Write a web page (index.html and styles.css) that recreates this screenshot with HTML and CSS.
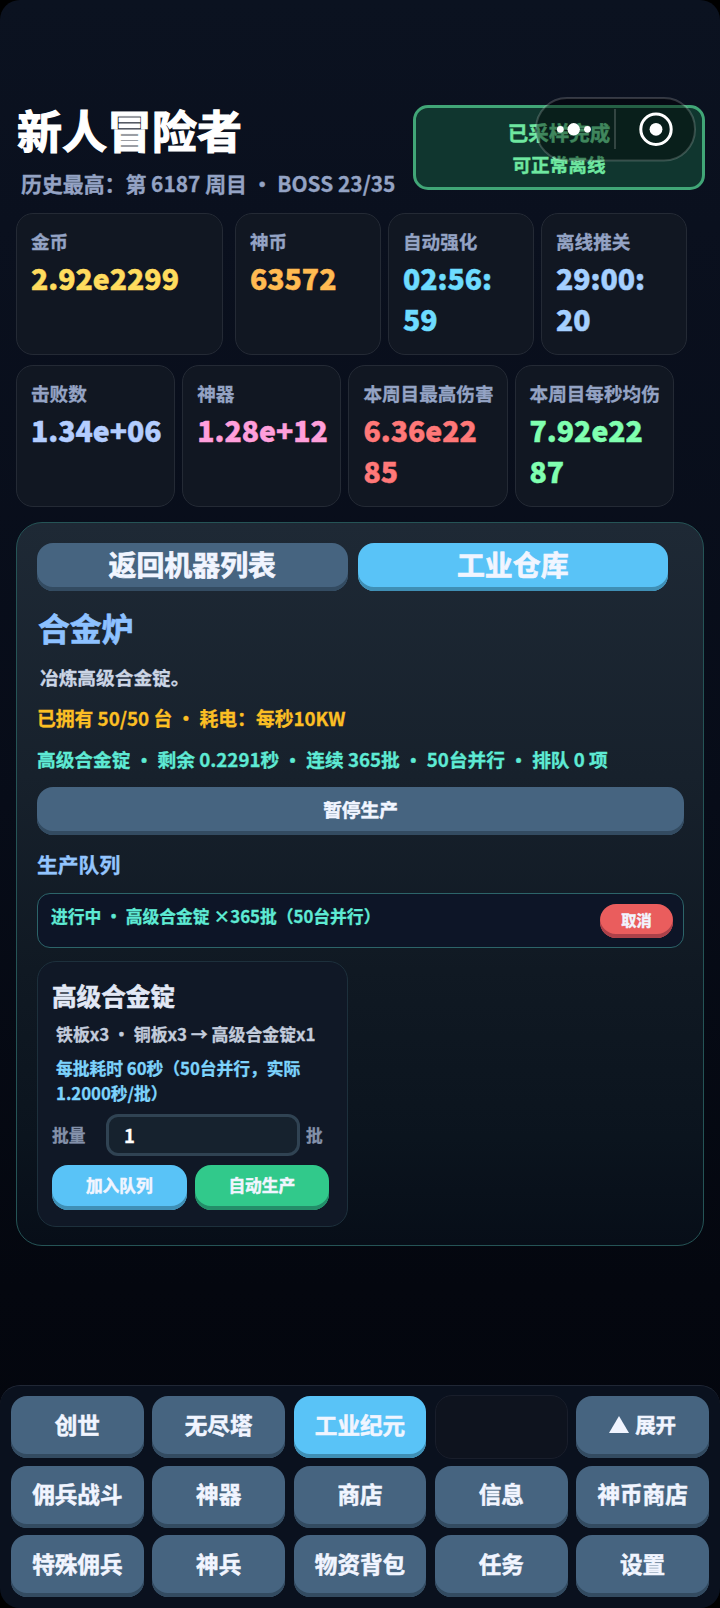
FILE: index.html
```html
<!DOCTYPE html>
<html lang="zh-CN">
<head>
<meta charset="utf-8">
<title>新人冒险者</title>
<link rel="stylesheet" href="styles.css">
</head>
<body>
<div class="app">
  <header class="header">
    <div class="player">
      <h1 class="player-name">新人冒险者</h1>
      <p class="record">历史最高：第 6187 周目 · BOSS 23/35</p>
    </div>
    <div class="sample"><span class="sample-state">已采样完成</span><span>可正常离线</span></div>
    <svg class="capsule" width="162" height="65" viewBox="0 0 162 65">
      <rect x="1" y="1" width="159" height="62.5" rx="31" fill="#000" fill-opacity=".42" stroke="#fff" stroke-opacity=".18" stroke-width="2"/>
      <path d="M80 12v40" stroke="#fff" stroke-opacity=".22" stroke-width="1.6"/>
      <g fill="#fff"><circle cx="25.3" cy="32.3" r="3.4"/><circle cx="38.7" cy="32.3" r="6.2"/><circle cx="52.5" cy="32.3" r="3.4"/><circle cx="121" cy="32.3" r="6.4"/></g>
      <circle cx="121" cy="32.3" r="15.2" fill="none" stroke="#fff" stroke-width="3"/>
    </svg>
  </header>

  <section class="stats">
    <div class="stat wide">
      <span class="label">金币</span><b class="value gold">2.92e2299</b></div>
    <div class="stat"><span class="label">神币</span><b class="value orange">63572</b></div>
    <div class="stat"><span class="label">自动强化</span><b class="value cyan">02:56:<br>59</b></div>
    <div class="stat"><span class="label">离线推关</span><b class="value ice">29:00:<br>20</b></div>
  </section>
  <section class="stats stats-bottom">
    <div class="stat"><span class="label">击败数</span><b class="value blue">1.34e+06</b></div>
    <div class="stat"><span class="label">神器</span><b class="value pink">1.28e+12</b></div>
    <div class="stat"><span class="label">本周目最高伤害</span><b class="value red">6.36e22<br>85</b></div>
    <div class="stat"><span class="label">本周目每秒均伤</span><b class="value green">7.92e22<br>87</b></div>
  </section>

  <main class="panel">
    <div class="tabs">
      <button class="btn tab">返回机器列表</button>
      <button class="btn tab active">工业仓库</button>
    </div>
    <h2 class="machine">合金炉</h2>
    <p class="line desc">冶炼高级合金锭。</p>
    <p class="line owned">已拥有 50/50 台 · 耗电：每秒10KW</p>
    <p class="line status">高级合金锭 · 剩余 0.2291秒 · 连续 365批 · 50台并行 · 排队 0 项</p>
    <button class="btn pause">暂停生产</button>
    <h3 class="queue-title">生产队列</h3>
    <div class="queue">
      <span class="queue-text">进行中 · 高级合金锭 ×365批（50台并行）</span>
      <button class="btn cancel">取消</button>
    </div>
    <article class="recipe">
      <h3 class="recipe-name">高级合金锭</h3>
      <p class="formula">铁板x3 · 铜板x3 → 高级合金锭x1</p>
      <p class="duration">每批耗时 60秒（50台并行，实际<br>1.2000秒/批）</p>
      <div class="batch">
        <span class="batch-label">批量</span>
        <input class="batch-input" value="1">
        <span class="batch-unit">批</span>
      </div>
      <div class="actions">
        <button class="btn action active">加入队列</button>
        <button class="btn action auto">自动生产</button>
      </div>
    </article>
  </main>

  <nav class="nav">
    <button class="btn item">创世</button>
    <button class="btn item">无尽塔</button>
    <button class="btn item active">工业纪元</button>
    <div class="empty"></div>
    <button class="btn item expand"><svg width="20" height="17" viewBox="0 0 20 17"><path d="M10 0l10 17H0z" fill="#f1f5ff"/></svg>展开</button>
    <button class="btn item">佣兵战斗</button>
    <button class="btn item">神器</button>
    <button class="btn item">商店</button>
    <button class="btn item">信息</button>
    <button class="btn item">神币商店</button>
    <button class="btn item">特殊佣兵</button>
    <button class="btn item">神兵</button>
    <button class="btn item">物资背包</button>
    <button class="btn item">任务</button>
    <button class="btn item">设置</button>
  </nav>
</div>
</body>
</html>
```
FILE: styles.css
```css
* { box-sizing: border-box; margin: 0; }
html { background: #000; }
body {
  font-family: "Noto Sans CJK SC", sans-serif;
  font-weight: 700;
  white-space: nowrap;
}
.app {
  display: flex;
  flex-direction: column;
  width: 720px;
  height: 1608px;
  overflow: hidden;
  border-radius: 20px;
  background: linear-gradient(180deg, #0b1220 0%, #0a101e 14%, #070c18 50%, #04070f 80%, #03050c 100%);
}

.header {
  position: relative;
  display: flex;
  justify-content: space-between;
  height: 213px;
  padding: 105px 15px 0 17px;
}
.player-name {
  height: 52px;
  font-size: 45px;
  line-height: 50px;
  color: #fff;
  -webkit-text-stroke: 1.2px currentColor;
}
.record { padding-left: 4px; font-size: 20.9px; line-height: 52px; color: #94a3c4; -webkit-text-stroke: .3px currentColor; }
.sample {
  display: flex;
  flex-direction: column;
  width: 292px;
  height: 85px;
  padding-top: 8px;
  border: 3px solid #41a677;
  border-radius: 15px;
  background: #10362f;
  color: #6ee7a0;
  font-size: 18.6px;
  line-height: 32px;
  text-align: center;
  -webkit-text-stroke: .4px currentColor;
}
.sample-state { font-size: 20.5px; }
.capsule { position: absolute; left: 535px; top: 97px; }

.stats { display: flex; gap: 7px; height: 142px; padding-left: 16px; }
.stats-bottom { margin-top: 10px; }
.stat {
  display: flex;
  flex-direction: column;
  width: 146px;
  padding: 12px 0 0 14px;
  border: 1.5px solid #242a35;
  border-radius: 17px;
  background: #111722;
}
.wide { width: 207px; margin-right: 5px; }
.stats-bottom .stat { width: 159.2px; }
.label { height: 30px; font-size: 18.6px; line-height: 30px; color: #94a3c4; -webkit-text-stroke: .3px currentColor; }
.value { margin-top: 1px; font-size: 28.4px; line-height: 41px; -webkit-text-stroke: .5px currentColor; }
.gold { color: #ffdc5e; }
.orange { color: #ffbb52; }
.cyan { color: #6edcff; }
.ice { color: #a5d0ff; }
.blue { color: #b3cdff; }
.pink { color: #ff9fdb; }
.red { color: #ff7878; }
.green { color: #80ffb0; }

.btn {
  display: flex;
  align-items: center;
  justify-content: center;
  padding: 0;
  border: 0;
  border-radius: 16px;
  background: #466480;
  box-shadow: inset 0 -4px 0 #334b61;
  color: #f1f5ff;
  font: inherit;
  -webkit-text-stroke: .5px currentColor;
}
.btn.active { background: #59c3f7; box-shadow: inset 0 -4px 0 #3f8fb5; }

.panel {
  display: flex;
  flex-direction: column;
  height: 724px;
  margin: 15px 16px 0;
  padding: 20px 19px 0 20px;
  border: 1px solid #255456;
  border-radius: 26px;
  background: linear-gradient(180deg, #1e2935 0%, #17212c 35%, #101923 62%, #0b141e 85%, #070e18 100%);
}
.tabs { display: flex; gap: 10px; padding-right: 16px; }
.tab { flex: 1; height: 48px; padding-bottom: 6px; font-size: 27.9px; -webkit-text-stroke-width: .7px; }
.machine { margin-top: 7px; padding-left: 1px; font-size: 31.8px; line-height: 59px; color: #8dc1ff; -webkit-text-stroke: .7px currentColor; }
.line { font-size: 18.7px; line-height: 41px; -webkit-text-stroke: .3px currentColor; }
.desc { padding-left: 3px; line-height: 40px; color: #cbd5e5; }
.owned { font-size: 18.8px; color: #fbbf24; }
.status { color: #5eead4; }
.pause { height: 48px; margin-top: 8px; padding-bottom: 5px; font-size: 18.7px; }
.queue-title { font-size: 20.8px; line-height: 58px; color: #93c5fd; height: 57px; -webkit-text-stroke: .3px currentColor; }
.queue {
  display: flex;
  justify-content: space-between;
  height: 55px;
  margin-top: 1px;
  padding: 10px 10px 0 13px;
  border: 1px solid #2c6469;
  border-radius: 13px;
  background: #0d1527;
}
.queue-text { font-size: 16.8px; line-height: 25px; color: #5eead4; -webkit-text-stroke: .3px currentColor; }
.cancel { width: 73px; height: 34px; padding-bottom: 5px; background: #ea5d5d; box-shadow: inset 0 -4px 0 #ac4149; font-size: 15.2px; }

.recipe {
  display: flex;
  flex-direction: column;
  width: 311px;
  height: 266px;
  margin-top: 13px;
  padding: 13px 18px 0 14px;
  border: 1.5px solid #1d303c;
  border-radius: 19px;
  background: #101826;
}
.recipe-name { height: 40px; font-size: 24.6px; line-height: 40px; color: #e2e8f5; -webkit-text-stroke: .6px currentColor; }
.formula { padding-left: 4px; font-size: 16.9px; line-height: 38px; color: #c3ccdc; -webkit-text-stroke: .3px currentColor; }
.duration { margin-top: 3px; padding-left: 4px; font-size: 16.75px; line-height: 25px; color: #7dd3fc; -webkit-text-stroke: .3px currentColor; }
.batch { display: flex; align-items: center; height: 42px; margin-top: 8px; font-size: 16.7px; color: #8491aa; -webkit-text-stroke: .3px currentColor; }
.batch-label { width: 54px; }
.batch-input {
  width: 194px;
  height: 42px;
  margin-right: 6px;
  padding: 0 15px;
  border: 3px solid #304353;
  border-radius: 12px;
  background: #16222e;
  color: #fff;
  font: inherit;
  font-size: 18.5px;
}
.actions { display: flex; gap: 8px; margin-top: 9px; }
.action { flex: 1; height: 45px; padding-bottom: 5px; font-size: 16.7px; }
.auto { background: #31c98b; box-shadow: inset 0 -4px 0 #238e69; }

.nav {
  display: grid;
  grid-template-columns: repeat(5, 1fr);
  grid-auto-rows: 62px;
  gap: 7.5px 8.6px;
  height: 223px;
  margin-top: auto;
  padding: 10px 11px 0;
  border-top: 1px solid #202735;
  border-radius: 20px 20px 0 0;
  background: #0a111e;
}
.item { padding-bottom: 6px; font-size: 22.6px; }
.expand { gap: 6px; font-size: 20.5px; }
.empty { margin: -1px 0; border: 1px solid #191e2b; border-radius: 17px; background: #0e131e; }
```
